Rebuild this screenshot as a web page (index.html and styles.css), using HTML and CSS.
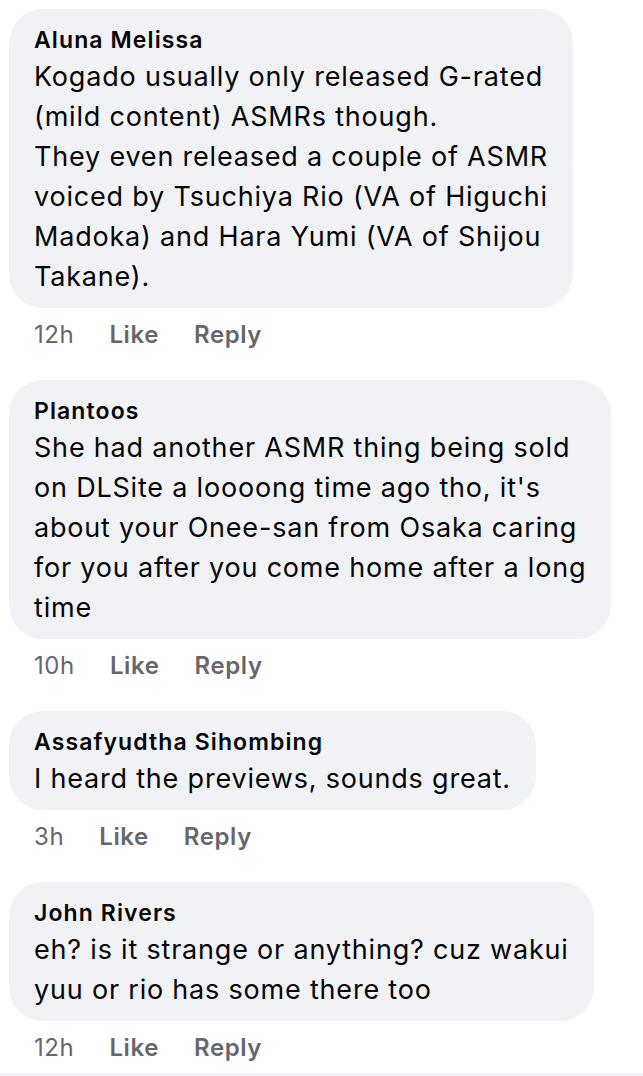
FILE: index.html
```html
<!DOCTYPE html>
<html lang="en">
<head>
    <meta charset="UTF-8">
    <meta name="viewport" content="width=device-width, initial-scale=1.0">
    <title>Comments</title>
    <link rel="stylesheet" href="styles.css">
</head>
<body>

    <div class="comments">
        <div class="comment">
            <div class="bubble">
                <div class="name">Aluna Melissa</div>
                <div class="text">Kogado usually only released G-rated<br>(mild content) ASMRs though.<br>They even released a couple of ASMR<br>voiced by Tsuchiya Rio (VA of Higuchi<br>Madoka) and Hara Yumi (VA of Shijou<br>Takane).</div>
            </div>
            <div class="meta">
                <span class="time">12h</span>
                <span class="action">Like</span>
                <span class="action">Reply</span>
            </div>
        </div>

        <div class="comment">
            <div class="bubble">
                <div class="name">Plantoos</div>
                <div class="text">She had another ASMR thing being sold<br>on DLSite a loooong time ago tho, it's<br>about your Onee-san from Osaka caring<br>for you after you come home after a long<br>time</div>
            </div>
            <div class="meta">
                <span class="time">10h</span>
                <span class="action">Like</span>
                <span class="action">Reply</span>
            </div>
        </div>

        <div class="comment">
            <div class="bubble">
                <div class="name">Assafyudtha Sihombing</div>
                <div class="text">I heard the previews, sounds great.</div>
            </div>
            <div class="meta">
                <span class="time">3h</span>
                <span class="action">Like</span>
                <span class="action">Reply</span>
            </div>
        </div>

        <div class="comment">
            <div class="bubble">
                <div class="name">John Rivers</div>
                <div class="text">eh? is it strange or anything? cuz wakui<br>yuu or rio has some there too</div>
            </div>
            <div class="meta">
                <span class="time">12h</span>
                <span class="action">Like</span>
                <span class="action">Reply</span>
            </div>
        </div>
    </div>

    <div class="next-strip"></div>

</body>
</html>
```

FILE: styles.css
```css
body {
    margin: 0;
    padding-top: 9px;
    background: #fff;
    font-family: Inter, "Liberation Sans", sans-serif;
    color: #050505;
}
.comments {
    padding-left: 9px;
}
.comment {
    margin-bottom: 30px;
}
.comment:last-child {
    margin-bottom: 10px;
}
.bubble {
    display: inline-block;
    background: #f0f2f5;
    border-radius: 34px;
    padding: 18px 25px 11px 25px;
}
.name {
    font-size: 23px;
    line-height: 26px;
    font-weight: 600;
    letter-spacing: 1.1px;
    margin-bottom: 4px;
}
.text {
    font-size: 27px;
    line-height: 40px;
    letter-spacing: 0.8px;
    white-space: nowrap;
}
.meta {
    display: flex;
    gap: 35px;
    margin-top: 12px;
    padding-left: 25px;
    font-size: 24px;
    line-height: 30px;
    letter-spacing: 0.6px;
    color: #65676b;
}
.time {
    font-weight: 400;
}
.action {
    font-weight: 600;
}
.next-strip {
    height: 6px;
    background: #f0f2f5;
}
```
